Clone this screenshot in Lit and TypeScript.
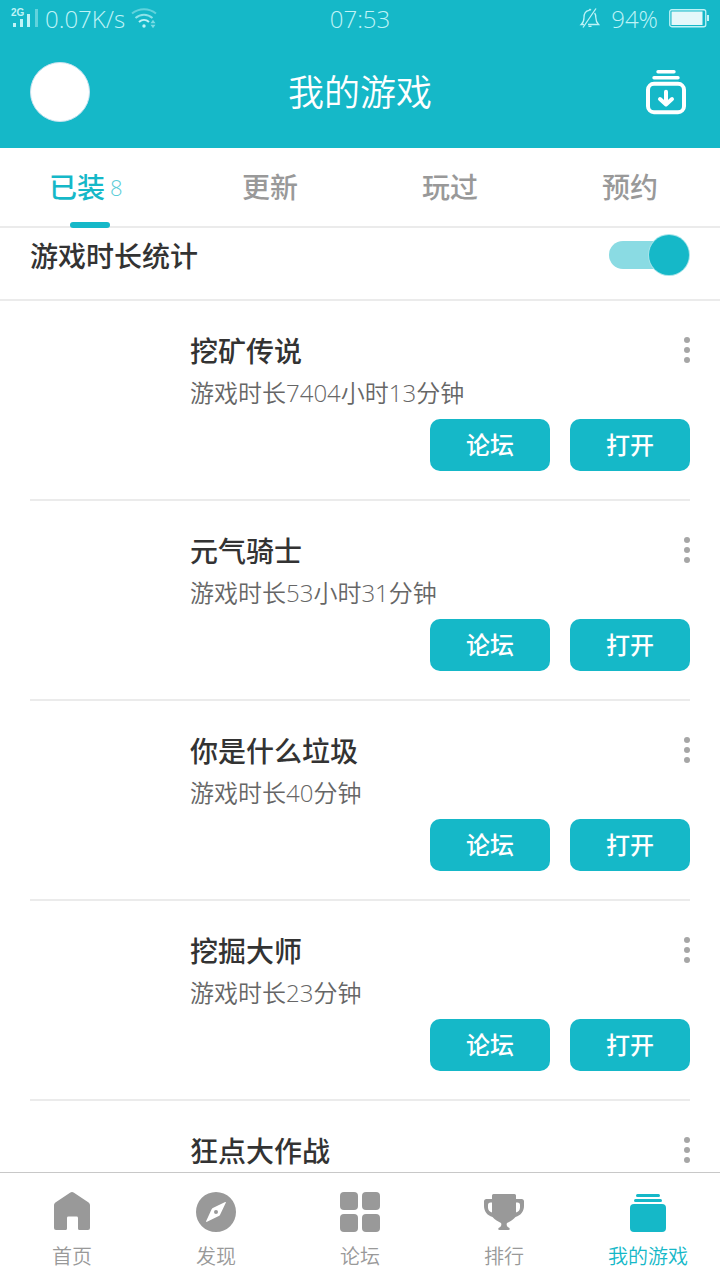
import { LitElement, html, css, svg, nothing } from "lit";
import { customElement, property, state } from "lit/decorators.js";

interface Game {
  name: string;
  time?: string;
}

const games: Game[] = [
  { name: "挖矿传说", time: "游戏时长7404小时13分钟" },
  { name: "元气骑士", time: "游戏时长53小时31分钟" },
  { name: "你是什么垃圾", time: "游戏时长40分钟" },
  { name: "挖掘大师", time: "游戏时长23分钟" },
  { name: "狂点大作战" },
];

const tabs = [
  { label: "已装", count: 8 },
  { label: "更新" },
  { label: "玩过" },
  { label: "预约" },
];

const navItems = [
  {
    label: "首页",
    icon: svg`<path d="M18 .8q2-1.400 4 0l14.600 9.600Q38 11.400 38 13v23q0 2-2 2h-8.400q-1.600 0-1.600-1.600V26q0-1.400-1.400-1.400h-8.200q-1.400 0-1.400 1.400v10.400q0 1.600-1.600 1.600H4q-2 0-2-2V13q0-1.600 1.400-2.600z"/>`,
  },
  {
    label: "发现",
    icon: svg`<path fill-rule="evenodd" d="M20 0a20 20 0 1 0 0 40a20 20 0 1 0 0-40zM29.200 10q1-.4.6.8L24.200 22.600q-.3.700-.9 1.200L11 29.800q-1.300.5-.8-.8L15.600 17.300q.4-.9 1.200-1.400zM20 18a2 2 0 1 0 0 4a2 2 0 1 0 0-4z"/>`,
  },
  {
    label: "论坛",
    icon: svg`<rect width="18" height="18" rx="4"/><rect x="22" width="18" height="18" rx="4"/><rect y="22" width="18" height="18" rx="4"/><rect x="22" y="22" width="18" height="18" rx="4"/>`,
  },
  {
    label: "排行",
    icon: svg`<path fill-rule="evenodd" d="M9.500 2h21q1.500 0 1.500 1.500V7h5.500Q40 7 40 9.500V14c0 5-3 9.500-8.500 11C29 28 26 29.500 23 31c-.8 1.500-.2 3.300 1.200 4.200q1.600.8 1.600 1.800 0 1-1.500 1h-8.600q-1.500 0-1.500-1 0-1 1.600-1.800c1.400-.9 2-2.700 1.200-4.200C14 29.500 11 28 8.500 25 3 23.500 0 19 0 14V9.500Q0 7 2.500 7H8V3.500Q8 2 9.500 2zM8 10.500H6.500Q4 10.500 4 13v2.500C4 18 5.500 20 8 20.500zm24 0v10c2.500-.5 4-2.500 4-5V13q0-2.500-2.500-2.500z"/>`,
  },
  {
    label: "我的游戏",
    icon: svg`<rect x="8" y="2" width="24" height="3" rx="1.500"/><rect x="6" y="7" width="28" height="3" rx="1.500"/><rect x="2" y="12" width="36" height="28" rx="4"/>`,
  },
];

@customElement("status-bar")
class StatusBar extends LitElement {
  static styles = css`
    :host {
      display: grid;
      grid-template-columns: 1fr auto 1fr;
      align-items: center;
      height: 36px;
      padding: 2px 10px 0;
      box-sizing: border-box;
      color: #bff3f7;
      font-size: 24px;
      font-weight: 300;
      line-height: 34px;
    }
    .side {
      display: flex;
      align-items: center;
    }
    .left {
      gap: 6px;
    }
    .right {
      justify-content: flex-end;
      gap: 11px;
    }
    svg {
      display: block;
      flex: none;
      overflow: visible;
    }
    .net {
      font-family: "Liberation Sans", sans-serif;
      font-size: 10px;
      font-weight: 700;
    }
  `;
  render() {
    return html`
      <div class="side left">
        <svg width="29" height="24" viewBox="0 0 29 24" fill="currentColor" aria-hidden="true">
          <text class="net" x="1" y="9">2G</text>
          <rect x="3" y="16" width="3" height="4" />
          <rect x="10" y="12" width="3" height="8" />
          <rect x="17" y="7" width="3" height="13" />
          <rect x="25" y="2" width="3" height="18" opacity=".45" />
        </svg>
        <span>0.07K/s</span>
        <svg width="26" height="22" viewBox="0 0 26 22" fill="none" stroke="currentColor" stroke-width="2" aria-hidden="true">
          <path d="M1 5.500C8-.2 18-.2 25 5.500" opacity=".45" />
          <path d="M4.500 10c5-4.400 12-4.400 17 0" opacity=".7" />
          <path d="M8 14c3-2.800 7-2.800 10 0" />
          <circle cx="13" cy="18" r="1.700" fill="currentColor" stroke="none" />
          <path d="M19.500 15.200l2.500-3.400 2.500 3.400zM19.500 16.800l2.500 3.400 2.500-3.400z" fill="currentColor" stroke="none" opacity=".6" />
        </svg>
      </div>
      <span>07:53</span>
      <div class="side right">
        <svg width="20" height="22" viewBox="0 0 20 22" fill="none" stroke="currentColor" stroke-width="1.300" aria-hidden="true">
          <path d="M4 16.500H1.200C3.500 14.500 4 12.500 4 9.500c0-4 2-6.700 5-7.200L10 1.300l1 1M14.600 5c1 1.300 1.200 2.700 1.200 4.500 0 3.500.8 5 2.800 7H8M8.500 18.400h3" />
          <path d="M16 .5L3 19.500" />
        </svg>
        <span>94%</span>
        <svg width="41" height="20" viewBox="0 0 41 20" aria-hidden="true">
          <rect x=".75" y=".75" width="36" height="17" rx="2" fill="none" stroke="currentColor" stroke-width="1.300" />
          <rect x="2.500" y="2.500" width="31" height="13.500" fill="#e4f8fa" />
          <rect x="38" y="6" width="2" height="6" fill="currentColor" />
        </svg>
      </div>
    `;
  }
}

@customElement("game-item")
class GameItem extends LitElement {
  @property({ attribute: false }) game!: Game;
  static styles = css`
    :host {
      display: block;
      margin: 0 30px;
      padding: 30px 0 28px 160px;
      border-bottom: 2px solid #ebebeb;
    }
    .top {
      display: flex;
      justify-content: space-between;
      align-items: center;
      height: 40px;
    }
    .name {
      margin: 0;
      font-size: 28px;
      line-height: 40px;
      font-weight: 500;
      color: #333;
    }
    .more {
      display: block;
      border: 0;
      padding: 0;
      background: none;
      color: #a6a6a6;
    }
    .more svg {
      display: block;
    }
    .time {
      margin: 6px 0 10px;
      font-size: 24px;
      line-height: 32px;
      font-weight: 350;
      color: #666;
    }
    .actions {
      display: flex;
      justify-content: flex-end;
      gap: 20px;
    }
    .action {
      width: 120px;
      height: 52px;
      padding: 0;
      border: 0;
      border-radius: 10px;
      background: #15b8c8;
      color: #fff;
      font: inherit;
      font-size: 24px;
      font-weight: 500;
      line-height: 52px;
    }
  `;
  render() {
    return html`
      <div class="top">
        <h2 class="name">${this.game.name}</h2>
        <button class="more" aria-label="更多">
          <svg width="6" height="28" viewBox="0 0 6 28" fill="currentColor">
            <circle cx="3" cy="3" r="3" />
            <circle cx="3" cy="13" r="3" />
            <circle cx="3" cy="23" r="3" />
          </svg>
        </button>
      </div>
      ${this.game.time
        ? html`<p class="time">${this.game.time}</p>
            <div class="actions">
              <button class="action">论坛</button>
              <button class="action">打开</button>
            </div>`
        : nothing}
    `;
  }
}

@customElement("app-root")
class AppRoot extends LitElement {
  @state() private tracking = true;
  static styles = css`
    :host {
      display: flex;
      flex-direction: column;
      height: 100vh;
      overflow: hidden;
      background: #fff;
      color: #333;
      font-family: "Open Sans", "Noto Sans CJK SC", sans-serif;
    }
    .head {
      flex: none;
      background: #15b8c8;
      color: #fff;
    }
    .bar {
      display: grid;
      grid-template-columns: 60px 1fr 60px;
      align-items: center;
      height: 112px;
      padding: 0 30px;
    }
    .avatar {
      width: 60px;
      height: 60px;
      box-sizing: border-box;
      padding: 0;
      border: 1px solid #c9e3f0;
      border-radius: 50%;
      background: #fff;
    }
    .title {
      margin: 0;
      padding-top: 2px;
      text-align: center;
      font-size: 36px;
      line-height: 52px;
      font-weight: 350;
    }
    .download {
      justify-self: end;
      padding: 0;
      border: 0;
      background: none;
      color: #fff;
    }
    .download svg {
      display: block;
    }
    .tabs {
      flex: none;
      display: flex;
      height: 78px;
      border-bottom: 2px solid #ebebeb;
    }
    .tab {
      flex: 1;
      display: flex;
      justify-content: center;
      align-items: center;
      position: relative;
      padding: 0;
      border: 0;
      background: none;
      font: inherit;
      font-size: 28px;
      line-height: 40px;
      font-weight: 500;
      color: #999;
    }
    .tab.on {
      color: #15b8c8;
    }
    .tab.on::after {
      content: "";
      position: absolute;
      left: calc(50% - 20px);
      bottom: -2px;
      width: 40px;
      height: 6px;
      border-radius: 3px;
      background: #15b8c8;
    }
    .count {
      min-width: 21px;
      margin-left: 5px;
      text-align: left;
      font-size: 22px;
      font-weight: 300;
      color: #5bcdd8;
    }
    .content {
      flex: 1;
      min-height: 0;
      overflow: hidden;
    }
    .stat {
      display: flex;
      justify-content: space-between;
      align-items: center;
      padding: 7px 31px 24px 30px;
      border-bottom: 2px solid #ebebeb;
      font-family: "Noto Sans CJK SC", sans-serif;
      font-size: 28px;
      line-height: 40px;
      font-weight: 500;
    }
    .switch {
      appearance: none;
      display: flex;
      align-items: center;
      width: 80px;
      height: 28px;
      margin: 6px 0;
      border-radius: 14px;
      background: #d5d5d5;
    }
    .switch::before {
      content: "";
      width: 40px;
      height: 40px;
      border-radius: 50%;
      background: #999;
    }
    .switch:checked {
      justify-content: flex-end;
      background: #8adbe3;
    }
    .switch:checked::before {
      background: #15b8c8;
      box-shadow: 0 0 0 1px #a5e4ea;
    }
    .nav {
      flex: none;
      display: flex;
      padding: 19px 0 7px;
      border-top: 1px solid #c8c8c8;
      background: #fff;
    }
    .link {
      flex: 1;
      display: flex;
      flex-direction: column;
      align-items: center;
      gap: 9px;
      font-size: 20px;
      line-height: 32px;
      font-weight: 350;
      color: #999;
      text-decoration: none;
    }
    .link.on {
      color: #15b8c8;
    }
    .link svg {
      display: block;
    }
  `;

  private toggle(e: Event) {
    this.tracking = (e.target as HTMLInputElement).checked;
  }

  render() {
    return html`
      <header class="head">
        <status-bar></status-bar>
        <div class="bar">
          <button class="avatar" aria-label="个人中心"></button>
          <h1 class="title">我的游戏</h1>
          <button class="download" aria-label="下载">
            <svg width="48" height="48" viewBox="0 0 48 48" fill="none" stroke="currentColor" stroke-linecap="round" stroke-linejoin="round">
              <path d="M16 3.800h16M12 9.800h24" stroke-width="3.400" />
              <rect x="6" y="15.800" width="36" height="28.400" rx="6" stroke-width="4" />
              <path d="M24 23.800v12M18 31l6 5.400 6-5.400" stroke-width="4" />
            </svg>
          </button>
        </div>
      </header>
      <div class="tabs" role="tablist">
        ${tabs.map(
          (t, i) => html`<button class="tab ${i === 0 ? "on" : ""}" role="tab" aria-selected=${i === 0}>
            ${t.label}${t.count ? html`<span class="count">${t.count}</span>` : nothing}
          </button>`
        )}
      </div>
      <main class="content">
        <div class="stat">
          <label for="tracking">游戏时长统计</label>
          <input class="switch" id="tracking" type="checkbox" .checked=${this.tracking} @change=${this.toggle} />
        </div>
        ${games.map((g) => html`<game-item .game=${g}></game-item>`)}
      </main>
      <nav class="nav">
        ${navItems.map(
          (n, i) => html`<a class="link ${i === 4 ? "on" : ""}" href="#">
            <svg width="40" height="40" viewBox="0 0 40 40" fill="currentColor" aria-hidden="true">${n.icon}</svg>
            <span>${n.label}</span>
          </a>`
        )}
      </nav>
    `;
  }
}
